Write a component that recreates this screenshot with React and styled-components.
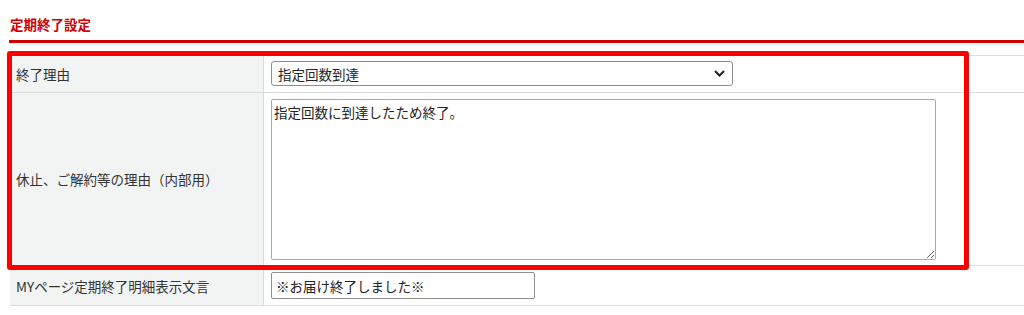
import React from 'react'
import styled, { createGlobalStyle } from 'styled-components'

const GlobalStyle = createGlobalStyle`
  html, body {
    margin: 0;
    padding: 0;
    background: #fff;
  }
  body {
    font-family: "Noto Sans CJK JP", "Noto Sans", sans-serif;
    color: #333;
  }
`

const Page = styled.div`
  position: relative;
  width: 1024px;
  height: 315px;
  padding-left: 9px;
  box-sizing: border-box;
  overflow: hidden;
`

const Heading = styled.h2`
  margin: 0 0 12px;
  padding: 15px 0 7px 1px;
  font-size: 13.5px;
  line-height: 18px;
  font-weight: bold;
  color: #d10000;
  border-bottom: 3px solid #d40000;
`

const Table = styled.table`
  width: 1014px;
  margin-left: 1px;
  border-collapse: collapse;
  font-size: 13.5px;
`

const Row = styled.tr`
  border-top: 1px solid #dcdcdc;
  border-bottom: 1px solid #dcdcdc;
`

const Label = styled.th`
  width: 247px;
  padding: 0 0 0 6px;
  text-align: left;
  font-weight: normal;
  background: #f2f3f3;
  border-right: 1px solid #dcdcdc;
  color: #333;
`

const Value = styled.td`
  padding: ${p => p.$pad || '5px 7px 6px'};
  vertical-align: top;
`

const SelectBox = styled.div`
  position: relative;
  width: 462px;
`

const Select = styled.select`
  display: block;
  width: 100%;
  height: 25px;
  padding: 0 24px 0 6px;
  appearance: none;
  font-family: inherit;
  font-size: 13.5px;
  color: #222;
  background: #fff;
  border: 1px solid #8f8f8f;
  border-radius: 3px;
`

const Chevron = styled.svg`
  position: absolute;
  right: 8px;
  top: 9px;
  width: 11px;
  height: 7px;
  pointer-events: none;
`

const TextArea = styled.textarea`
  display: block;
  width: 665px;
  height: 161px;
  padding: 3px 2px;
  box-sizing: border-box;
  font-family: inherit;
  font-size: 13.5px;
  line-height: 18px;
  color: #222;
  border: 1px solid #a9a9a9;
  border-radius: 2px;
`

const Input = styled.input`
  display: block;
  width: 264px;
  height: 27px;
  padding: 0 4px;
  box-sizing: border-box;
  font-family: inherit;
  font-size: 13.5px;
  color: #222;
  border: 1px solid #8f8f8f;
  border-radius: 2px;
`

// annotation frame drawn over the first two rows
const Highlight = styled.div`
  position: absolute;
  left: 7px;
  top: 51px;
  width: 962px;
  height: 219px;
  box-sizing: border-box;
  border: 5px solid #ff0000;
  border-radius: 3px;
  pointer-events: none;
`

export default function App() {
  return (
    <Page>
      <GlobalStyle />
      <Heading>定期終了設定</Heading>
      <Table>
        <tbody>
          <Row>
            <Label>終了理由</Label>
            <Value>
              <SelectBox>
                <Select defaultValue="count">
                  <option value="count">指定回数到達</option>
                  <option value="cancel">ご解約</option>
                  <option value="pause">休止</option>
                </Select>
                <Chevron viewBox="0 0 11 7">
                  <path d="M1 1l4.5 4.5L10 1" fill="none" stroke="#222" strokeWidth="2" />
                </Chevron>
              </SelectBox>
            </Value>
          </Row>
          <Row>
            <Label>休止、ご解約等の理由（内部用）</Label>
            <Value $pad="6px 7px 5px">
              <TextArea defaultValue="指定回数に到達したため終了。" />
            </Value>
          </Row>
          <Row>
            <Label>MYページ定期終了明細表示文言</Label>
            <Value $pad="6px 7px 6px">
              <Input defaultValue="※お届け終了しました※" />
            </Value>
          </Row>
        </tbody>
      </Table>
      <Highlight />
    </Page>
  )
}
